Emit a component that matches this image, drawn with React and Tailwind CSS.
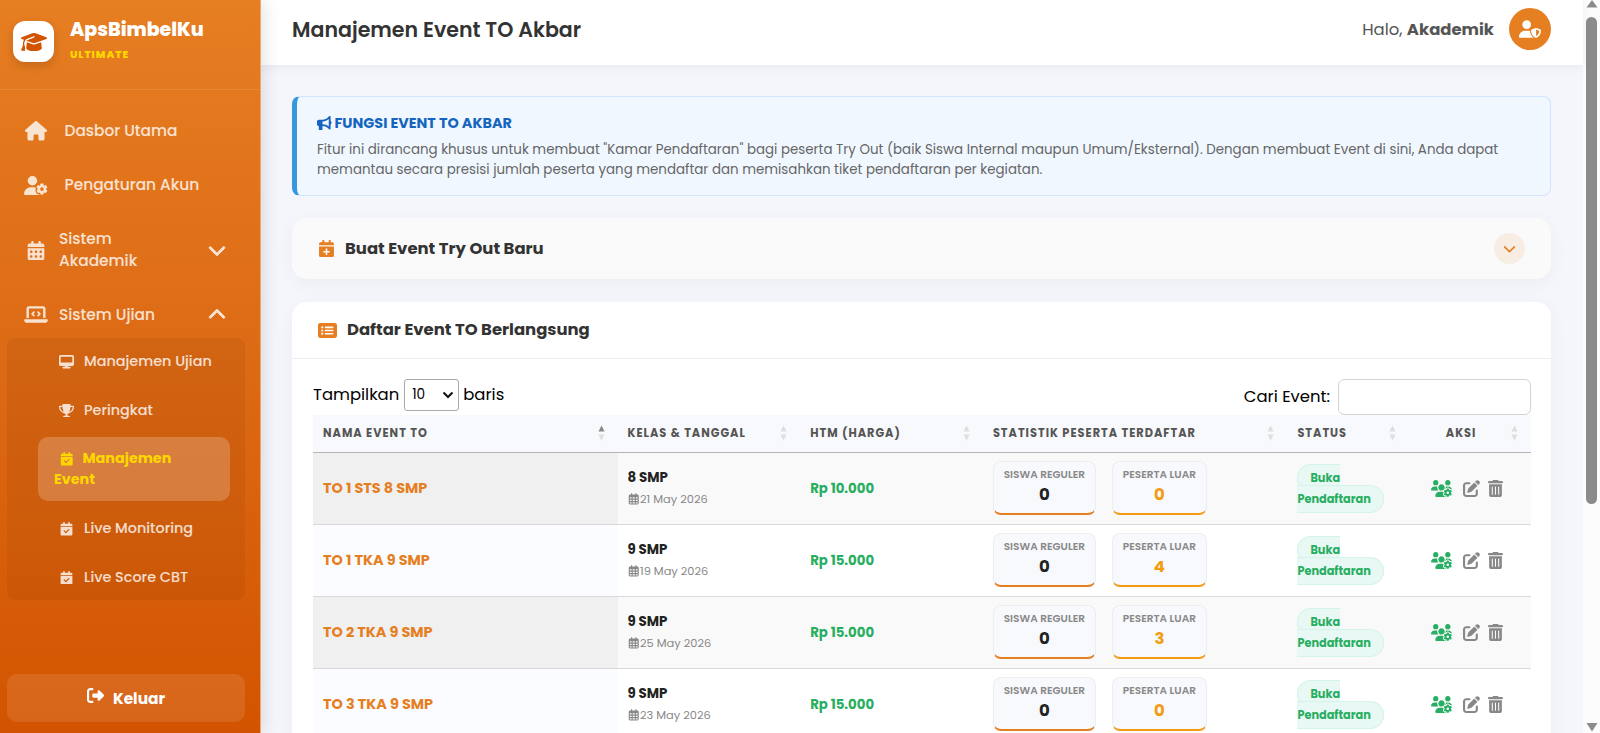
import React, { useState } from 'react';
import {
  FaGraduationCap, FaHouse, FaUserGear, FaCalendarDays, FaLaptopCode, FaChevronDown, FaChevronUp,
  FaDesktop, FaTrophy, FaCalendarCheck, FaRightFromBracket, FaUserShield, FaBullhorn,
  FaCalendarPlus, FaRectangleList, FaRegCalendarDays, FaUsersGear, FaPenToSquare, FaTrashCan,
} from 'react-icons/fa6';

const EVENTS = [
  { name: 'TO 1 STS 8 SMP', kelas: '8 SMP', tanggal: '21 May 2026', harga: 'Rp 10.000', reguler: 0, luar: 0 },
  { name: 'TO 1 TKA 9 SMP', kelas: '9 SMP', tanggal: '19 May 2026', harga: 'Rp 15.000', reguler: 0, luar: 4 },
  { name: 'TO 2 TKA 9 SMP', kelas: '9 SMP', tanggal: '25 May 2026', harga: 'Rp 15.000', reguler: 0, luar: 3 },
  { name: 'TO 3 TKA 9 SMP', kelas: '9 SMP', tanggal: '23 May 2026', harga: 'Rp 15.000', reguler: 0, luar: 0 },
];

const COLUMNS = [
  { label: 'NAMA EVENT TO', className: 'w-[25%]' },
  { label: 'KELAS & TANGGAL', className: 'w-[15%]' },
  { label: 'HTM (HARGA)', className: 'w-[15%]' },
  { label: 'STATISTIK PESERTA TERDAFTAR', className: 'w-[25%]' },
  { label: 'STATUS', className: 'w-[10%]' },
  { label: 'AKSI', className: 'w-[10%]' },
];

function SubItem({ icon: Icon, label }) {
  return (
    <a className="flex h-[48.4px] items-center pl-[52px] text-[14.4px] font-medium">
      <Icon className="mr-[10px] w-[15px] text-[13.5px]" />
      <span>{label}</span>
    </a>
  );
}

function Sidebar() {
  return (
    <aside className="relative z-20 flex w-[261px] shrink-0 flex-col border-r border-[#f0a868] bg-linear-to-b from-[#e67e22] to-[#d35400] text-white shadow-[4px_0_15px_rgba(0,0,0,0.1)]">
      <div className="flex h-[90px] items-start border-b border-white/10 pt-[21px] pl-[13px]">
        <div className="flex size-[41px] items-center justify-center rounded-xl bg-white shadow-[0_4px_10px_rgba(0,0,0,0.15)]">
          <FaGraduationCap className="text-[26px] text-[#d35400]" />
        </div>
        <div className="-mt-[3px] ml-[16px]">
          <div className="text-[18.95px] leading-6 font-extrabold">ApsBimbelKu</div>
          <div className="mt-[5px] text-[10.3px] leading-4 font-extrabold tracking-[1px] text-[#ffd700]">ULTIMATE</div>
        </div>
      </div>

      <nav className="flex flex-1 flex-col pt-[14px] text-[15.4px] font-medium text-white/80">
        <a className="flex h-[54px] items-center pl-[24px]">
          <FaHouse className="w-6 text-[19.5px]" />
          <span className="ml-[16.5px]">Dasbor Utama</span>
        </a>
        <a className="flex h-[54px] items-center pl-[24px]">
          <FaUserGear className="w-6 text-[19px]" />
          <span className="ml-[16.5px]">Pengaturan Akun</span>
        </a>
        <a className="flex h-[76px] items-center pl-[24px]">
          <FaCalendarDays className="w-6 text-[19px]" />
          <span className="ml-[11px] w-[100px] leading-[22.5px]">Sistem Akademik</span>
          <FaChevronDown className="ml-[49px] stroke-current stroke-[20] text-[18px]" />
        </a>
        <a className="flex h-[50px] items-center pt-[3px] pl-[24px]">
          <FaLaptopCode className="w-6 text-[19px]" />
          <span className="ml-[11px] w-[100px] whitespace-nowrap">Sistem Ujian</span>
          <FaChevronUp className="ml-[49px] stroke-current stroke-[20] text-[18px]" />
        </a>
        <div className="mr-[15px] ml-[7px] h-[262px] rounded-lg bg-black/5">
          <SubItem icon={FaDesktop} label="Manajemen Ujian" />
          <SubItem icon={FaTrophy} label="Peringkat" />
          <a className="mt-[2px] mr-[15px] mb-[4px] ml-[31px] block h-[64px] rounded-[10px] bg-white/20 pt-[11px] pr-10 pl-[16px] text-[14.3px] leading-[21.6px] font-bold text-[#ffd700]">
            <FaCalendarCheck className="mr-[9px] ml-[6px] inline text-[13.5px]" />
            Manajemen Event
          </a>
          <SubItem icon={FaCalendarCheck} label="Live Monitoring" />
          <SubItem icon={FaCalendarCheck} label="Live Score CBT" />
        </div>
      </nav>

      <button className="mr-[15px] mb-[11px] ml-[7px] flex h-12 items-center justify-center rounded-[10px] bg-white/10 pt-px text-[15.4px] font-bold">
        <FaRightFromBracket className="mr-[9px] -mt-[7px] text-[17px]" />
        Keluar
      </button>
    </aside>
  );
}

function SortIcon({ active }) {
  return (
    <svg className="w-[7px] shrink-0" viewBox="0 0 7 16" width="7" height="16">
      <path d="M3.5 0.5L6.5 6.5H0.5Z" fill={active ? '#888' : '#dddee0'} />
      <path d="M3.5 15.5L6.5 9.5H0.5Z" fill="#dddee0" />
    </svg>
  );
}

function StatBox({ label, value, className }) {
  return (
    <div className={`h-[54px] rounded-lg border border-[#eeeeee] border-b-2 bg-[#f8f9fc] pt-[4px] text-center ${className}`}>
      <div className="text-[10.5px] leading-[17px] font-semibold text-[#888]">{label}</div>
      <div className="text-[16.5px] leading-6 font-bold">{value}</div>
    </div>
  );
}

function EventRow({ event, odd }) {
  return (
    <tr className={`h-[72px] border-b border-[#d8d8d8] ${odd ? 'bg-[#f9f9f9]' : 'bg-white'}`}>
      <td className={`pt-[2px] pl-[10px] text-[14.45px] font-bold text-[#e67e22] ${odd ? 'bg-[#f0f0f0]' : 'bg-[#fafcff]'}`}>
        {event.name}
      </td>
      <td className="pl-[10px]">
        <div className="text-[13.4px] leading-[22px] font-bold text-[#222]">{event.kelas}</div>
        <div className="flex items-center gap-px text-[11.4px] leading-[21px] text-[#888]">
          <FaRegCalendarDays className="text-[11.5px]" />
          {event.tanggal}
        </div>
      </td>
      <td className="pt-px pl-[10px] text-[13.3px] font-bold text-[#27ae60]">{event.harga}</td>
      <td className="pl-[10px]">
        <div className="flex gap-[16px]">
          <StatBox label="SISWA REGULER" value={event.reguler} className="w-[103px] border-b-[#e67e22] text-[#222]" />
          <StatBox label="PESERTA LUAR" value={event.luar} className="w-[95px] border-b-[#f39c12] text-[#f39c12]" />
        </div>
      </td>
      <td className="pt-[2px] pl-[10px] text-[11.3px] leading-[21px]">
        <span className="rounded-[20px] border border-[#d4f5e6] bg-[#e8f8f5] px-[12px] py-[5px] font-bold text-[#27ae60]">
          Buka Pendaftaran
        </span>
      </td>
      <td>
        <div className="flex items-center pl-[22px] text-[#888]">
          <FaUsersGear className="text-[21px] text-[#27ae60]" />
          <FaPenToSquare className="ml-[11px] text-[17px]" />
          <FaTrashCan className="ml-[7px] text-[17px]" />
        </div>
      </td>
    </tr>
  );
}

export default function App() {
  const [search, setSearch] = useState('');

  return (
    <div className="flex h-[733px] w-full overflow-hidden bg-[#f4f6fb] font-['Poppins','Inter',sans-serif] text-[#333]">
      <Sidebar />

      <div className="flex min-w-0 flex-1 flex-col">
        <header className="relative z-10 flex h-[65px] shrink-0 items-start justify-between bg-white pr-[32px] pl-[31px] shadow-[0_2px_10px_rgba(0,0,0,0.06)]">
          <h1 className="pt-[14px] text-[20.55px] leading-8 font-semibold">Manajemen Event TO Akbar</h1>
          <div className="flex items-center pt-[8px] text-[16.45px] text-[#555]">
            <span className="pt-[2px]">Halo,&nbsp;</span>
            <b className="pt-[2px] font-bold">Akademik</b>
            <div className="ml-[15px] flex size-[42px] items-center justify-center rounded-full bg-[#e67e22] text-white">
              <FaUserShield className="text-[22px]" />
            </div>
          </div>
        </header>

        <main className="flex flex-1 flex-col pt-[31px] pr-[32px] pl-[31px]">
          <section className="h-[100px] shrink-0 rounded-lg border border-l-[5px] border-[#cfe4fd] border-l-[#3498db] bg-[#f0f7ff] pt-[15px] pl-5">
            <h2 className="flex items-center gap-[3px] text-[14.4px] leading-[22px] font-bold text-[#1565c0]">
              <FaBullhorn className="text-[14.5px]" />
              FUNGSI EVENT TO AKBAR
            </h2>
            <p className="mt-[6px] pr-5 text-[13.4px] leading-[20.2px] text-[#666]">
              Fitur ini dirancang khusus untuk membuat "Kamar Pendaftaran" bagi peserta Try Out (baik Siswa Internal maupun Umum/Eksternal). Dengan membuat Event di sini, Anda dapat memantau secara presisi jumlah peserta yang mendaftar dan memisahkan tiket pendaftaran per kegiatan.
            </p>
          </section>

          <section className="mt-[22px] flex h-[61px] shrink-0 items-center justify-between rounded-[15px] bg-[#fafafa] px-[26px] shadow-[0_5px_20px_rgba(0,0,0,0.04)]">
            <h3 className="flex items-center text-[16.45px] font-bold">
              <FaCalendarPlus className="mr-[10px] text-[17px] text-[#e67e22]" />
              <span className="pt-px">Buat Event Try Out Baru</span>
            </h3>
            <button className="flex size-[31px] items-center justify-center rounded-full bg-[#e67e22]/10 text-[#e67e22]">
              <FaChevronDown className="text-[13px]" />
            </button>
          </section>

          <section className="mt-[23px] h-[520px] shrink-0 rounded-[15px] bg-white shadow-[0_5px_20px_rgba(0,0,0,0.04)]">
            <h3 className="flex h-[57px] items-center border-b border-[#eee] pl-[26px] text-[16.45px] font-bold">
              <FaRectangleList className="mr-[10px] text-[19px] text-[#e67e22]" />
              <span className="pt-px">Daftar Event TO Berlangsung</span>
            </h3>
            <div className="pt-5 pr-5 pl-[21px]">
              <div className="flex h-9 justify-between text-[16.45px] text-black">
                <label className="flex h-8 items-center">
                  <span>Tampilkan</span>
                  <span className="mr-[4px] ml-[5px] flex h-[32px] w-[55px] items-center justify-between rounded-[3px] border border-[#aaa] bg-white pr-1 pl-[7px]">
                    <span className="text-[13.7px]">10</span>
                    <svg width="12" height="8" viewBox="0 0 12 8" fill="none" stroke="#111" strokeWidth="2">
                      <path d="M1.5 1.5L6 6L10.5 1.5" />
                    </svg>
                  </span>
                  <span>baris</span>
                </label>
                <label className="flex items-center">
                  <span>Cari Event:</span>
                  <input
                    value={search}
                    onChange={(e) => setSearch(e.target.value)}
                    className="ml-[8px] h-9 w-[193px] rounded-md border border-[#d4d4d4] bg-white px-3 outline-none"
                  />
                </label>
              </div>
              <table className="w-full table-fixed border-collapse">
                <thead>
                  <tr className="h-[37px] border-b border-[#b5b5b5] bg-[#f8f9fc]">
                    {COLUMNS.map((col, i) => (
                      <th key={col.label} className={`pr-[13px] pl-[10px] text-[11.35px] font-bold tracking-[1px] text-[#555] ${col.className}`}>
                        <div className="flex items-center justify-between">
                          <span className={i === 5 ? 'flex-1 pr-[8px] text-center' : 'whitespace-nowrap'}>{col.label}</span>
                          <SortIcon active={i === 0} />
                        </div>
                      </th>
                    ))}
                  </tr>
                </thead>
                <tbody>
                  {EVENTS.map((event, i) => (
                    <EventRow key={event.name} event={event} odd={i % 2 === 0} />
                  ))}
                </tbody>
              </table>
            </div>
          </section>
        </main>
      </div>

      {/* scrollbar */}
      <div className="flex w-[17px] shrink-0 flex-col items-center bg-[#fcfcfc]">
        <svg width="12" height="9" viewBox="0 0 12 9">
          <path d="M6 0L11.5 7.5H0.5Z" fill="#8b8b8b" />
        </svg>
        <div className="mt-[8px] h-[487px] w-[11px] rounded-full bg-[#8b8b8b]" />
        <svg width="12" height="10" viewBox="0 0 12 10" className="mt-auto mb-px">
          <path d="M6 9.5L11.5 1H0.5Z" fill="#8b8b8b" />
        </svg>
      </div>
    </div>
  );
}
